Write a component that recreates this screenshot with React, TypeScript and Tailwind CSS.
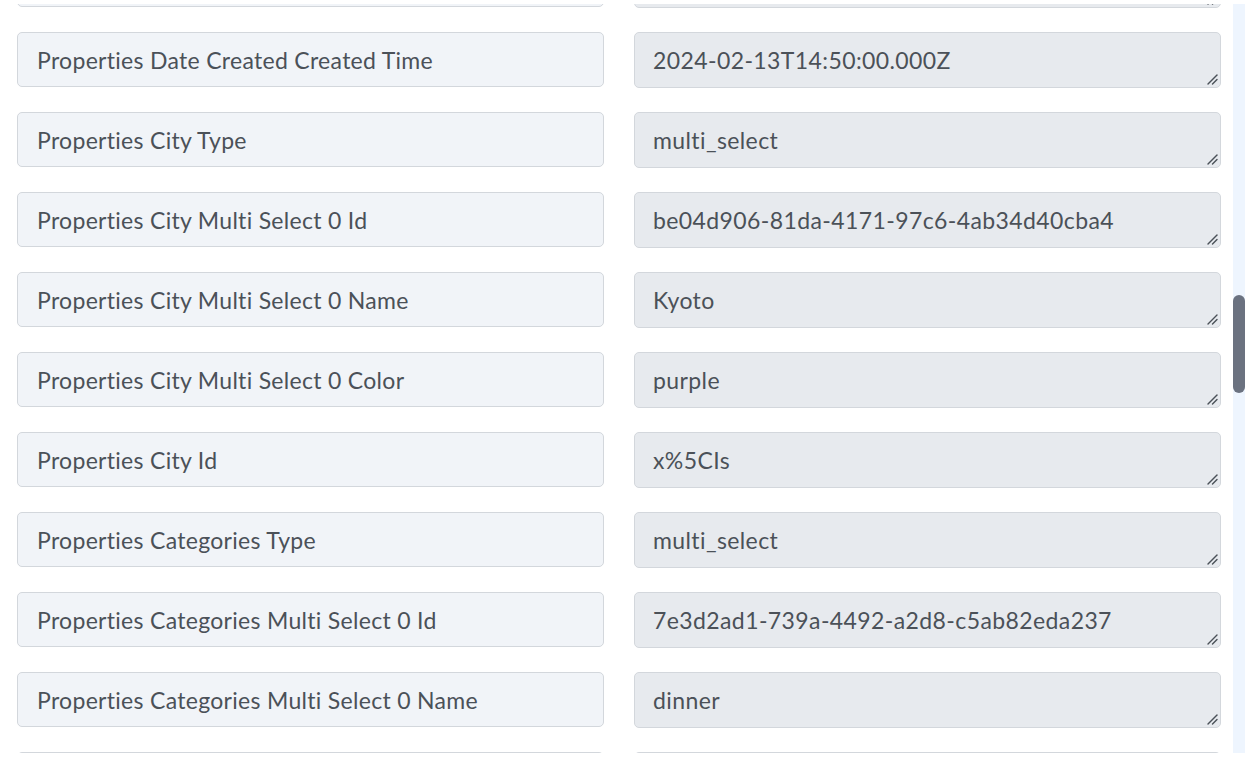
import React from "react";

const rows: [string, string][] = [
  ["", ""],
  ["Properties Date Created Created Time", "2024-02-13T14:50:00.000Z"],
  ["Properties City Type", "multi_select"],
  ["Properties City Multi Select 0 Id", "be04d906-81da-4171-97c6-4ab34d40cba4"],
  ["Properties City Multi Select 0 Name", "Kyoto"],
  ["Properties City Multi Select 0 Color", "purple"],
  ["Properties City Id", "x%5CIs"],
  ["Properties Categories Type", "multi_select"],
  ["Properties Categories Multi Select 0 Id", "7e3d2ad1-739a-4492-a2d8-c5ab82eda237"],
  ["Properties Categories Multi Select 0 Name", "dinner"],
  ["", ""],
];

const font = { fontFamily: "Lato, 'Open Sans', sans-serif" };

// Resize grip drawn in the textarea's bottom-right corner
function Grip() {
  return (
    <svg
      className="absolute right-[3px] bottom-[3px] pointer-events-none"
      width="12"
      height="12"
      viewBox="0 0 12 12"
    >
      <path d="M2 11 L11 2" stroke="#4b5158" strokeWidth="1.4" strokeLinecap="round" />
      <path d="M6.5 11 L11 6.5" stroke="#4b5158" strokeWidth="1.4" strokeLinecap="round" />
    </svg>
  );
}

export default function App() {
  return (
    <div className="w-[1257px] h-[784px] bg-white pt-[4px] overflow-hidden" style={font}>
      <div className="h-[749px] flex">
        <div className="flex-1 overflow-hidden">
          <div className="-mt-[52px] flex flex-col gap-[24px] pl-[17px] pr-[12px]">
            {rows.map(([k, v], i) => (
              <div key={i} className="flex gap-[30px]">
                <div className="w-[587px] h-[55px] shrink-0 rounded-[5px] border border-[#d3d7dc] bg-[#f1f4f8] px-[19px] pt-[2px] flex items-center text-[23px] tracking-[0.3px] text-[#4b5158] [font-variant-ligatures:none]">
                  {k}
                </div>
                <div className="relative w-[587px] h-[56px] shrink-0">
                  <textarea
                    readOnly
                    rows={1}
                    value={v}
                    className="block w-full h-full resize-none rounded-[5px] border border-[#d3d7dc] bg-[#e7eaee] px-[18px] pt-[12px] pb-0 text-[23px] tracking-[0.4px] leading-[30px] text-[#4b5158] outline-none [font-variant-ligatures:none]"
                    style={font}
                  />
                  <Grip />
                </div>
              </div>
            ))}
          </div>
        </div>
        <div className="w-[12px] mr-[12px] bg-[#eef5fe] relative">
          <div className="absolute left-0 top-[291px] w-[12px] h-[98px] rounded-full bg-[#6b7280]" />
        </div>
      </div>
    </div>
  );
}
